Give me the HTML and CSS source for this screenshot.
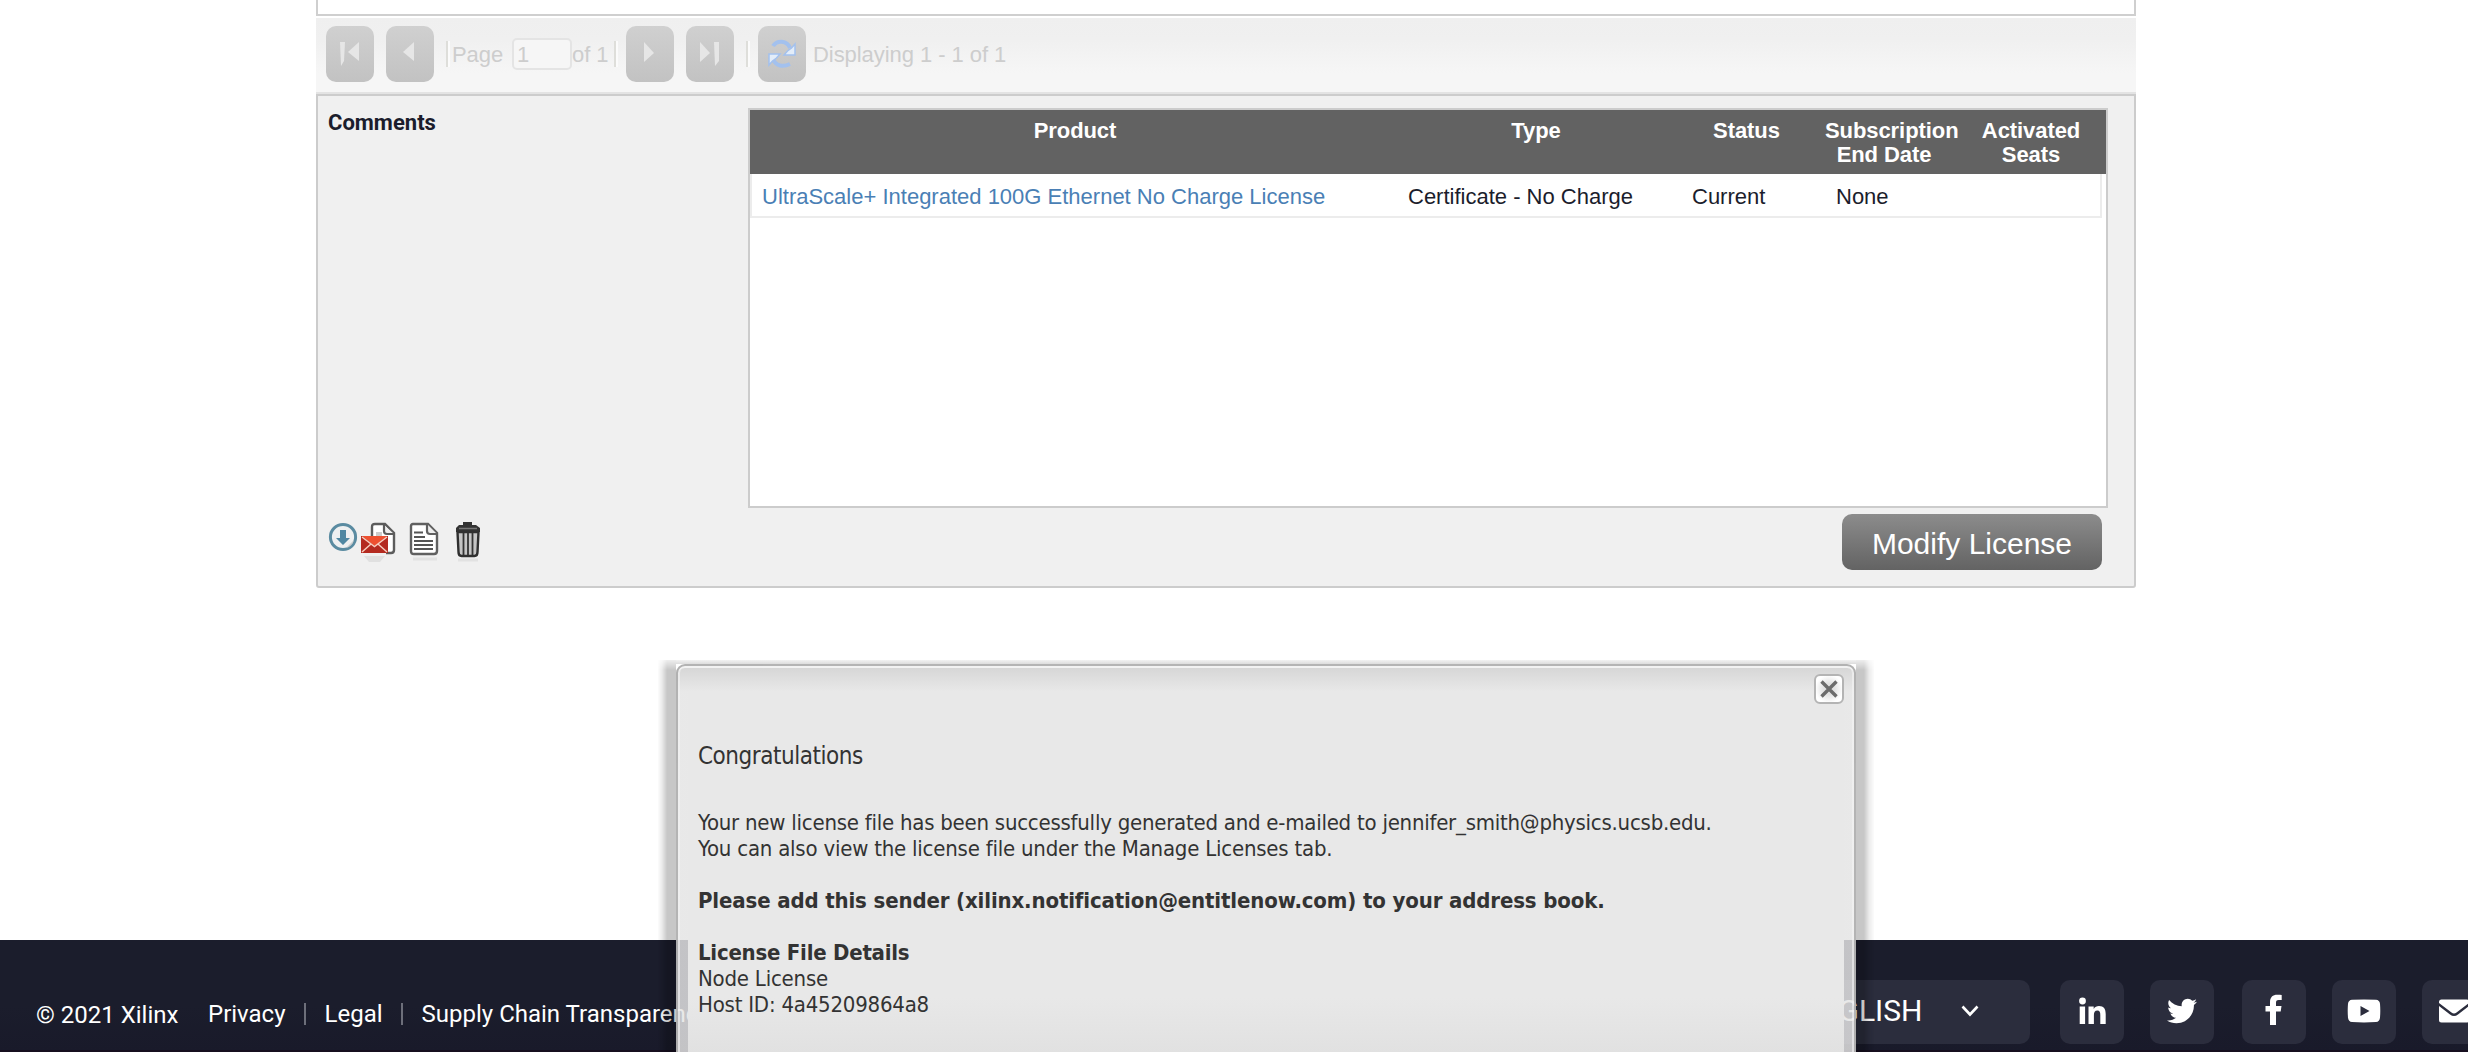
FILE: index.html
```html
<!DOCTYPE html>
<html lang="en">
<head>
<meta charset="utf-8">
<title>Manage Licenses</title>
<link rel="stylesheet" href="styles.css">
</head>
<body>
<main class="page">
  <div class="grid-end"></div>

  <div class="pager">
    <span class="pbtn"><svg width="24" height="30" viewBox="0 0 24 30"><path d="M2 2h5l-1 19-3 5z"/><path d="M21 2v19l-11-9z"/></svg></span>
    <span class="pbtn"><svg width="24" height="30" viewBox="0 0 24 30"><path d="M16 2v19L5 12z"/></svg></span>
    <i class="sep sep-a"></i>
    <span class="plabel page-word">Page</span>
    <span class="pinput">1</span>
    <span class="plabel of-word">of 1</span>
    <i class="sep sep-b"></i>
    <span class="pbtn"><svg width="24" height="30" viewBox="0 0 24 30"><path d="M6 2v20l10-9z"/></svg></span>
    <span class="pbtn"><svg width="24" height="30" viewBox="0 0 24 30"><path d="M2 2v20l10-9z"/><path d="M16 2h5v19l-4 5z"/></svg></span>
    <i class="sep sep-c"></i>
    <span class="pbtn refresh"><svg width="30" height="30" viewBox="0 0 30 30"><g fill="none" stroke="#a3c1ee" stroke-width="4"><path d="M6 7C10 1 20 1 23 9"/><path d="M6 19c2 9 11 9 17 6"/></g><path fill="#e3edf9" stroke="#a3c1ee" stroke-width="1.5" d="M28 5v11H17l3.500-4 4-3z"/><path fill="#e3edf9" stroke="#a3c1ee" stroke-width="1.5" d="M2 26V15h11l-3.500 4-4 3z"/></svg></span>
    <span class="plabel">Displaying 1 - 1 of 1</span>
  </div>

  <section class="detail">
    <div class="side">
      <h2>Comments</h2>
      <div class="tools">
        <svg class="t-down" width="30" height="30" viewBox="0 0 30 30"><circle cx="15" cy="15" r="12.6" fill="#eef0f1" stroke="#5a8ba1" stroke-width="3"/><path d="M18 26a11 11 0 0 0 8-8z" fill="#c9cccd"/><path fill="#4f87a2" d="M12 8h6v8h4l-7 7-7-7h4z"/></svg>
        <svg class="t-mail" width="36" height="40" viewBox="0 0 36 40"><path d="M11 16V5q0-3 3-3h10l9 9v17q0 3-3 3h-5" fill="#fff" stroke="#5c5c5c" stroke-width="2.4"/><path d="M23 3v6q0 3 3 3h7" fill="#eee" stroke="#5c5c5c" stroke-width="2.2"/><path fill="#ccc" d="M15 10h6v4h-6z"/><path fill="#b42a20" d="M0 14h27v17H0z"/><path fill="#ee5030" d="M1 14h25L14 24z"/><path d="M1 15l12.500 9.500L26 15M1 30l9-8M26 30l-9-8" fill="none" stroke="#f6cdbf" stroke-width="1.500"/><path fill="#e0e0e0" d="M3 34h21l-5 6H8z"/></svg>
        <svg class="t-doc" width="32" height="40" viewBox="0 0 32 40"><path d="M4 2h15l9 9v18q0 3-3 3H5q-3 0-3-3V4q0-2 2-2z" fill="#fff" stroke="#606060" stroke-width="2.400"/><path d="M18 2v7q0 3 3 3h7" fill="#eee" stroke="#606060" stroke-width="2.200"/><path d="M5 10.500h9M5 15h11M5 19h19M5 23h19M5 27h19" stroke="#555" stroke-width="2"/><path d="M4 37h24" stroke="#e2e2e2" stroke-width="3"/></svg>
        <svg class="t-bin" width="28" height="40" viewBox="0 0 28 40"><path d="M9 1.500h9" stroke="#333" stroke-width="3"/><path fill="#333" d="M5 3h17l4 3v4H2V6z"/><path d="M5 6.500h18" stroke="#777" stroke-width="1.500"/><path d="M3.500 10h21l-1 20q0 4-3 4H7.500q-3 0-3-4z" fill="#c4c4c4" stroke="#2f2f2f" stroke-width="2.400"/><path d="M9.500 11v22M14 11v22M18.500 11v22" stroke="#333" stroke-width="1.800"/><path d="M4 38h20" stroke="#e2e2e2" stroke-width="3"/></svg>
      </div>
    </div>
    <div class="main-col">
      <div class="products">
        <div class="row head">
          <span>Product</span><span>Type</span><span>Status</span><span class="sub"><b>Subscription</b><br>End Date</span><span>Activated<br>Seats</span>
        </div>
        <div class="row item">
          <a>UltraScale+ Integrated 100G Ethernet No Charge License</a><span>Certificate - No Charge</span><span>Current</span><span>None</span><span></span>
        </div>
      </div>
      <button class="modify">Modify License</button>
    </div>
  </section>
</main>

<footer class="footer">
  <span class="copy">© 2021 Xilinx</span>
  <nav class="links"><a>Privacy</a><i></i><a class="legal">Legal</a><i></i><a>Supply Chain Transparency</a></nav>
  <div class="lang">ENGLISH<svg width="18" height="12" viewBox="0 0 18 12"><path d="M1.500 1.500 9 9.500l7.500-8" fill="none" stroke="#fff" stroke-width="2.600"/></svg></div>
  <div class="social">
    <span><svg width="28" height="28" viewBox="0 0 28 28"><circle cx="4.500" cy="4" r="3.400"/><path d="M1.700 9.500h5.400V27H1.700zM10.500 9.500h5.200v2.400c1.200-2 3-2.900 5.300-2.900 4.800 0 6.700 2.700 6.700 8v10h-5.400v-9c0-2.800-.6-4.500-2.900-4.500-2.600 0-3.500 1.800-3.500 4.500v9h-5.400z"/></svg></span>
    <span><svg width="30" height="30" viewBox="0 0 512 512"><path d="M459.370 151.716c.325 4.548.325 9.097.325 13.645 0 138.720-105.583 298.558-298.558 298.558-59.452 0-114.680-17.219-161.137-47.106 8.447.974 16.568 1.299 25.340 1.299 49.055 0 94.213-16.568 130.274-44.832-46.132-.975-84.792-31.188-98.112-72.772 6.498.974 12.995 1.624 19.818 1.624 9.421 0 18.843-1.300 27.614-3.573-48.081-9.747-84.143-51.980-84.143-102.985v-1.299c13.969 7.797 30.214 12.670 47.431 13.319-28.264-18.843-46.781-51.005-46.781-87.391 0-19.492 5.197-37.360 14.294-52.954 51.655 63.675 129.300 105.258 216.365 109.807-1.624-7.797-2.599-15.918-2.599-24.040 0-57.828 46.782-104.934 104.934-104.934 30.213 0 57.502 12.670 76.670 33.137 23.715-4.548 46.456-13.320 66.599-25.340-7.798 24.366-24.366 44.833-46.132 57.827 21.117-2.273 41.584-8.122 60.426-16.243-14.292 20.791-32.161 39.308-52.628 54.253z"/></svg></span>
    <span class="fb"><svg width="18" height="32" viewBox="0 0 18 32"><path d="M5 31V17.500H.5v-5.600H5V8.500C5 3.200 7.800.8 12.200.8c2 0 3.500.1 4.500.3v5h-3c-2.300 0-2.700 1.100-2.700 2.900v2.900h5.500l-.8 5.600H11V31z"/></svg></span>
    <span><svg width="34" height="24" viewBox="0 0 34 24"><path fill-rule="evenodd" d="M5 .8Q17 0 29 .8q3.500.3 4 4 .6 7 0 14-.5 3.900-4 4.300-12 .8-24 0-3.500-.4-4-4.300-.6-7 0-14Q1.500 1.100 5 .8zM13.500 7v10l9-5z"/></svg></span>
    <span class="env"><svg width="30" height="24" viewBox="0 0 30 24"><path d="M0 4V3Q0 .5 2.500.5h25Q30 .5 30 3v1L17.500 13.500q-2.500 1.800-5 0zM0 7l11 8.500q4 3 8 0L30 7v14q0 2.500-2.500 2.500h-25Q0 23.500 0 21z"/></svg></span>
  </div>
</footer>

<div class="dialog">
  <i class="shade left"></i><i class="shade right"></i><i class="shade top"></i>
  <div class="dialog-frame">
    <div class="dialog-body">
      <p class="congrats">Congratulations</p>
      <p class="line1">Your new license file has been successfully generated and e-mailed to jennifer_smith@physics.ucsb.edu.</p>
      <p>You can also view the license file under the Manage Licenses tab.</p>
      <p class="strong gap">Please add this sender (xilinx.notification@entitlenow.com) to your address book.</p>
      <p class="strong details gap">License File Details</p>
      <p>Node License</p>
      <p>Host ID: 4a45209864a8</p>
    </div>
  </div>
  <span class="close"><svg width="18" height="18" viewBox="0 0 18 18"><path d="M1.500 1.500 16.500 16.500M16.500 1.500 1.500 16.500" stroke="#6c6c6c" stroke-width="3.400"/></svg></span>
</div>
</body>
</html>
```
FILE: styles.css
```css
* { box-sizing: border-box; }
html, body { margin: 0; height: 1052px; overflow: hidden; }
body {
  position: relative;
  display: flex;
  flex-direction: column;
  background: #fff;
  font: 22px/24px "Liberation Sans", Arial, sans-serif;
  color: #1b1d2c;
}
h2, p { margin: 0; }

.page { width: 1820px; margin-left: 316px; height: 940px; flex: none; }
.grid-end { height: 16px; border: 2px solid #cfcfcf; border-top: 0; }

/* paging toolbar */
.pager {
  height: 78px;
  display: flex;
  align-items: center;
  padding: 0 0 2px 10px;
  border-top: 2px solid #fff;
  border-bottom: 2px solid #e3e3e3;
  background: linear-gradient(#efefef, #f0f0f0 30%, #f6f6f6 75%, #f6f6f6);
  color: #cdcdcd;
}
.pbtn {
  width: 48px;
  height: 56px;
  flex: none;
  margin-right: 12px;
  padding-top: 2px;
  border-radius: 10px;
  background: linear-gradient(#d0d0d0, #c2c2c2);
  display: flex;
  align-items: center;
  justify-content: center;
}
.pbtn svg { fill: #e6e6e6; }
.pbtn.refresh { margin-right: 7px; padding-top: 0; }
.plabel { padding-top: 2px; letter-spacing: -0.06px; }
.sep { width: 4px; height: 26px; flex: none; background: #dededa; border-right: 2px solid #fbfbfb; }
.sep-a { margin-right: 2px; }
.sep-b { margin: 0 8px 0 8px; }
.sep-c { margin: 0 8px 0 0; }
.page-word { width: 60px; }
.pinput {
  width: 60px;
  height: 32px;
  border: 2px solid #e4e4e4;
  border-radius: 5px;
  background: #f6f6f6;
  padding: 3px 0 0 3px;
}
.of-word { width: 34px; white-space: nowrap; }

/* license detail */
.detail {
  height: 494px;
  display: flex;
  border: 2px solid #cccccc;
  border-radius: 0 0 3px 3px;
  background: #f0f0f0;
}
.side { width: 430px; padding: 15px 0 0 10px; display: flex; flex-direction: column; justify-content: space-between; }
h2 { font: bold 22px/24px Roboto, sans-serif; }
.tools { display: flex; height: 64px; }
.t-mail { margin-left: 3px; }
.t-doc { margin-left: 12px; }
.t-bin { margin-left: 13px; }
.tools svg { flex: none; }

.main-col { width: 1360px; padding-top: 12px; }
.products { height: 400px; border: 2px solid #cccccc; background: #fff; }
.row { display: grid; white-space: nowrap; }
.head {
  height: 64px;
  padding-top: 9px;
  grid-template-columns: 650px 272px 149px 122px 163px;
  background: #626262;
  color: #fff;
  font-weight: bold;
  text-align: center;
  letter-spacing: -0.08px;
}
.head .sub { padding-left: 4px; }
.head .sub b { display: block; width: 0; margin-bottom: -24px; }
.head .sub + span { padding-left: 13px; }
.item {
  width: 1352px;
  height: 44px;
  border: solid #ececec;
  border-width: 0 2px 2px;
  align-items: center;
  padding: 3px 0 0 10px;
  grid-template-columns: 646px 284px 144px 1fr 10px;
}
.item a { color: #4a7fb5; }
.modify {
  display: block;
  width: 260px;
  height: 56px;
  margin: 6px 6px 0 auto;
  padding: 3px 0 0;
  border: 0;
  border-radius: 10px;
  background: linear-gradient(#8c8c8c, #636363);
  color: #fff;
  font: 30px/34px "Liberation Sans", Arial, sans-serif;
}

/* footer */
.footer {
  height: 112px;
  flex: none;
  display: flex;
  align-items: flex-start;
  padding: 40px 0 0 36px;
  border-bottom: 2px solid #170f1f;
  background: linear-gradient(#1b1d2c 60%, #191a2a);
  color: #fff;
  font: 24px/64px Roboto, sans-serif;
  white-space: nowrap;
}
.copy { width: 172px; flex: none; line-height: 71px; }
.links { display: flex; flex: none; align-items: center; height: 64px; line-height: 24px; width: 1583px; padding-top: 3px; }
.links i { width: 2px; height: 22px; margin: 0 19px 0 18px; background: #6d6f7a; }
.lang {
  width: 239px;
  height: 64px;
  flex: none;
  border-radius: 0 10px 10px 0;
  background: #2b2d3d;
  display: flex;
  align-items: center;
  justify-content: space-between;
  padding: 0 51px 3px 9px;
  font-size: 30px;
  line-height: 61px;
}
.social { display: flex; flex: none; margin-left: 30px; gap: 26px; }
.social span {
  width: 64px;
  height: 64px;
  flex: none;
  border-radius: 10px;
  background: #2b2d3d;
  display: flex;
  align-items: center;
  justify-content: center;
}
.social .fb { margin-left: 2px; padding-bottom: 4px; }
.social span:not(.fb) { padding-bottom: 2px; }
.social svg { fill: #fff; }

/* confirmation dialog, floats over the page */
.dialog { position: absolute; left: 676px; top: 664px; width: 1180px; height: 388px; }
.shade { position: absolute; }
.left, .right {
  top: -4px;
  bottom: 0;
  width: 18px;
  -webkit-mask-image: linear-gradient(rgba(0,0,0,.3), #000 10px);
  mask-image: linear-gradient(rgba(0,0,0,.3), #000 10px);
}
.left { left: -18px; background: linear-gradient(90deg, rgba(0,0,0,.01), rgba(0,0,0,.08) 4px, rgba(0,0,0,.22) 9px); }
.right { right: -18px; background: linear-gradient(270deg, rgba(0,0,0,.01), rgba(0,0,0,.08) 5px, rgba(0,0,0,.22) 10px); }
.top { top: -4px; left: 0; right: 0; height: 4px; background: linear-gradient(#f2f2f2, #dcdcdc); }
.dialog-frame {
  position: absolute;
  inset: 0;
  padding: 0 10px;
  border: 2px solid rgba(170,170,170,.85);
  border-bottom: 0;
  border-radius: 9px 9px 0 0;
  background: linear-gradient(rgba(207,207,207,.84) 2px, rgba(228,228,228,.84) 26px);
  box-shadow: inset 0 2px 0 #f2f2f2, inset 2px 0 0 rgba(245,245,245,.6), inset -2px 0 0 rgba(245,245,245,.6);
}
.dialog-body {
  height: 360px;
  margin-top: 26px;
  padding: 50px 0 0 10px;
  background: linear-gradient(#e8e8e8 85%, #e1e1e1);
  color: #333;
  font: 22px/26px "DejaVu Sans Condensed", "DejaVu Sans", sans-serif;
  letter-spacing: -0.22px;
  white-space: nowrap;
}
.congrats { font-size: 24px; line-height: 28px; margin-bottom: 40px; letter-spacing: -0.46px; }
.line1 { letter-spacing: -0.24px; }
.strong { font-weight: bold; letter-spacing: -0.14px; }
.details { letter-spacing: -0.24px; }
.gap { margin-top: 26px; }
.close {
  position: absolute;
  left: 1138px;
  top: 10px;
  width: 30px;
  height: 30px;
  border: 2px solid #b4b4b4;
  border-radius: 6px;
  background: radial-gradient(#e2e2e2 30%, #fff 75%);
  display: flex;
  align-items: center;
  justify-content: center;
}
```
